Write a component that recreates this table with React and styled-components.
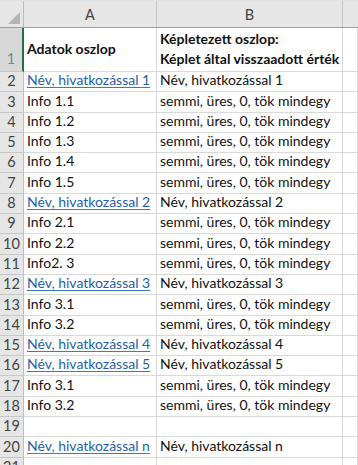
import React from 'react';
import styled, {createGlobalStyle} from 'styled-components';

const Global = createGlobalStyle`
	html, body {
		margin: 0;
		padding: 0;
		background: #ffffff;
	}
	body {
		font-family: Lato, 'Liberation Sans', Arial, sans-serif;
		width: 358px;
		height: 465px;
		overflow: hidden;
	}
`

const Sheet = styled.div`
	display: flex;
	flex-direction: column;
	width: 358px;
	height: 465px;
	overflow: hidden;
	background: #ffffff;
`

const TopStrip = styled.div`
	height: 3px;
	background: #f3f3f3;
	border-bottom: 1px solid #e0e0e0;
`

const Grid = styled.div`
	display: grid;
	grid-template-columns: 24px 133px 186px 1fr;
	grid-auto-rows: ${props => props.rowh || '20.3px'};
`

const HeadRow = styled(Grid)`
	grid-template-rows: 26px;
	background: #e6e6e6;
	border-bottom: 1px solid #9e9e9e;
`

const Corner = styled.div`
	position: relative;
	border-right: 1px solid #bdbdbd;
	&::after {
		content: '';
		position: absolute;
		right: 3px;
		bottom: 3px;
		width: 0;
		height: 0;
		border-left: 12px solid transparent;
		border-bottom: 12px solid #b4b4b4;
	}
`

const ColHead = styled.div`
	display: flex;
	align-items: center;
	justify-content: center;
	font-size: 14.5px;
	color: #444444;
	border-right: 1px solid ${props => props.last ? 'transparent' : '#c6c6c6'};
`

const RowNum = styled.div`
	display: flex;
	align-items: flex-end;
	justify-content: center;
	padding-bottom: ${props => props.tall ? '3px' : '1px'};
	box-sizing: border-box;
	background: ${props => props.active ? '#d8d8d8' : '#e6e6e6'};
	color: ${props => props.active ? '#7a8a7e' : '#444444'};
	font-size: 14.5px;
	line-height: 18px;
	border-bottom: 1px solid #c8c8c8;
	border-right: 1px solid ${props => props.active ? '#217346' : '#bdbdbd'};
	border-right-width: ${props => props.active ? '2px' : '1px'};
`

const Cell = styled.div`
	display: flex;
	flex-direction: column;
	justify-content: ${props => props.center ? 'center' : 'flex-end'};
	padding: 0 3px 1px 3px;
	box-sizing: border-box;
	font-size: 14px;
	line-height: 20px;
	white-space: nowrap;
	overflow: visible;
	color: #111111;
	font-weight: ${props => props.bold ? 700 : 400};
	border-bottom: 1px solid #d9d9d9;
	border-right: 1px solid #d9d9d9;
`

const Link = styled.span`
	color: #1f5fa8;
	text-decoration: underline;
	text-decoration-color: #3d7bbf;
	text-underline-offset: 2px;
`

const filler = 'semmi, üres, 0, tök mindegy'

const rows = [
	{n: 2, a: 'Név, hivatkozással 1', link: true, b: 'Név, hivatkozással 1'},
	{n: 3, a: 'Info 1.1', b: filler},
	{n: 4, a: 'Info 1.2', b: filler},
	{n: 5, a: 'Info 1.3', b: filler},
	{n: 6, a: 'Info 1.4', b: filler},
	{n: 7, a: 'Info 1.5', b: filler},
	{n: 8, a: 'Név, hivatkozással 2', link: true, b: 'Név, hivatkozással 2'},
	{n: 9, a: 'Info 2.1', b: filler},
	{n: 10, a: 'Info 2.2', b: filler},
	{n: 11, a: 'Info2. 3', b: filler},
	{n: 12, a: 'Név, hivatkozással 3', link: true, b: 'Név, hivatkozással 3'},
	{n: 13, a: 'Info 3.1', b: filler},
	{n: 14, a: 'Info 3.2', b: filler},
	{n: 15, a: 'Név, hivatkozással 4', link: true, b: 'Név, hivatkozással 4'},
	{n: 16, a: 'Név, hivatkozással 5', link: true, b: 'Név, hivatkozással 5'},
	{n: 17, a: 'Info 3.1', b: filler},
	{n: 18, a: 'Info 3.2', b: filler},
	{n: 19, a: '', b: ''},
	{n: 20, a: 'Név, hivatkozással n', link: true, b: 'Név, hivatkozással n'},
	{n: 21, a: '', b: ''},
]

const App = () => {
	return (
		<Sheet>
			<Global />
			<TopStrip />
			<HeadRow>
				<Corner />
				<ColHead>A</ColHead>
				<ColHead>B</ColHead>
				<ColHead last />
			</HeadRow>
			<Grid rowh="44px">
				<RowNum active tall>1</RowNum>
				<Cell center bold>Adatok oszlop</Cell>
				<Cell center bold>
					<div>Képletezett oszlop:</div>
					<div>Képlet által visszaadott érték</div>
				</Cell>
				<Cell />
			</Grid>
			<Grid>
				{rows.map(r => (
					<React.Fragment key={r.n}>
						<RowNum>{r.n}</RowNum>
						<Cell>{r.link ? <Link>{r.a}</Link> : r.a}</Cell>
						<Cell>{r.b}</Cell>
						<Cell />
					</React.Fragment>
				))}
			</Grid>
		</Sheet>
	)
}

export default App
